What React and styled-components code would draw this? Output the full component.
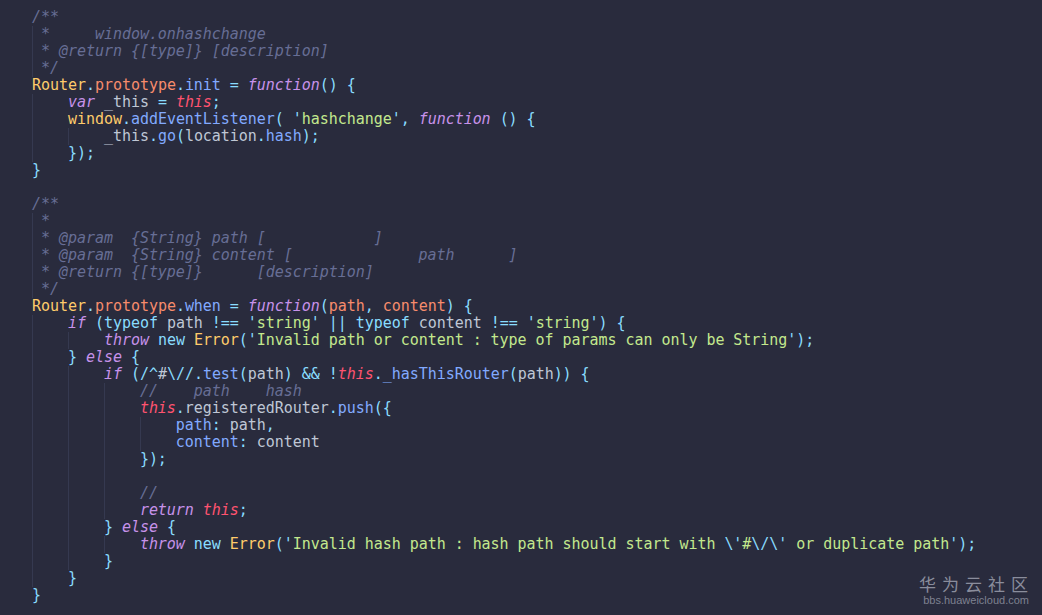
import React from "react";
import styled, { createGlobalStyle } from "styled-components";

const Global = createGlobalStyle`
  html, body { margin: 0; padding: 0; background: #292b3d; }
  #root { min-height: 100vh; }
`;

const COLORS = {
  c: "#676e95",
  cls: "#ffcb6b",
  p: "#89ddff",
  pr: "#f78c6c",
  fn: "#82aaff",
  kw: "#c792ea",
  th: "#ff5370",
  v: "#bfc7d5",
  s: "#c3e88d",
  par: "#f78c6c",
  key: "#82aaff",
};
const ITALIC = { c: true, kw: true, th: true };

const Screen = styled.div`
  position: relative;
  width: 1042px;
  height: 615px;
  overflow: hidden;
  background: #292b3d;
`;

const Code = styled.pre`
  margin: 0;
  padding: 9px 0 0 32px;
  font-family: "DejaVu Sans Mono", "Liberation Mono", monospace;
  font-size: 15px;
  line-height: 17px;
  letter-spacing: -0.04px;
  color: #bfc7d5;
  display: flex;
  flex-direction: column;
`;

const Line = styled.div`
  height: 17px;
  white-space: pre;
  background-image: repeating-linear-gradient(
    to right,
    #353950 0 1px,
    transparent 1px 36px
  );
  background-repeat: no-repeat;
  background-size: ${(p) => p.$guides * 36}px 100%;
`;

const Tok = styled.span`
  color: ${(p) => COLORS[p.$k] || "#bfc7d5"};
  font-style: ${(p) => (ITALIC[p.$k] ? "italic" : "normal")};
`;

const Watermark = styled.div`
  position: absolute;
  right: 13px;
  bottom: 8px;
  display: flex;
  flex-direction: column;
  align-items: flex-end;
  color: #8a8d9c;
`;

const WmTitle = styled.div`
  font-family: "Noto Sans CJK SC", sans-serif;
  font-size: 17px;
  line-height: 20px;
  letter-spacing: 6px;
  margin-right: -5px;
`;

const WmUrl = styled.div`
  font-family: "Liberation Sans", Arial, sans-serif;
  font-size: 11px;
  line-height: 13px;
  color: #7e8190;
`;

const sp = (n) => ["v", " ".repeat(n)];

const LINES = [
  [0, [["c", "/**"]]],
  [1, [["c", " *     window.onhashchange"]]],
  [1, [["c", " * @return {[type]} [description]"]]],
  [1, [["c", " */"]]],
  [0, [["cls", "Router"], ["p", "."], ["pr", "prototype"], ["p", "."], ["fn", "init"], sp(1), ["p", "="], sp(1), ["kw", "function"], ["p", "()"], sp(1), ["p", "{"]]],
  [1, [sp(4), ["kw", "var"], ["v", " _this "], ["p", "="], sp(1), ["th", "this"], ["p", ";"]]],
  [1, [sp(4), ["cls", "window"], ["p", "."], ["fn", "addEventListener"], ["p", "( "], ["p", "'"], ["s", "hashchange"], ["p", "'"], ["p", ","], sp(1), ["kw", "function"], sp(1), ["p", "()"], sp(1), ["p", "{"]]],
  [2, [sp(8), ["v", "_this"], ["p", "."], ["fn", "go"], ["p", "("], ["v", "location"], ["p", "."], ["fn", "hash"], ["p", ");"]]],
  [1, [sp(4), ["p", "});"]]],
  [0, [["p", "}"]]],
  [0, []],
  [0, [["c", "/**"]]],
  [1, [["c", " *"]]],
  [1, [["c", " * @param  {String} path [            ]"]]],
  [1, [["c", " * @param  {String} content [              path      ]"]]],
  [1, [["c", " * @return {[type]}      [description]"]]],
  [1, [["c", " */"]]],
  [0, [["cls", "Router"], ["p", "."], ["pr", "prototype"], ["p", "."], ["fn", "when"], sp(1), ["p", "="], sp(1), ["kw", "function"], ["p", "("], ["par", "path"], ["p", ","], sp(1), ["par", "content"], ["p", ")"], sp(1), ["p", "{"]]],
  [1, [sp(4), ["kw", "if"], sp(1), ["p", "("], ["p", "typeof"], ["v", " path "], ["p", "!=="], sp(1), ["p", "'"], ["s", "string"], ["p", "'"], sp(1), ["p", "||"], sp(1), ["p", "typeof"], ["v", " content "], ["p", "!=="], sp(1), ["p", "'"], ["s", "string"], ["p", "'"], ["p", ")"], sp(1), ["p", "{"]]],
  [2, [sp(8), ["kw", "throw"], sp(1), ["p", "new"], sp(1), ["cls", "Error"], ["p", "("], ["p", "'"], ["s", "Invalid path or content : type of params can only be String"], ["p", "'"], ["p", ");"]]],
  [1, [sp(4), ["p", "}"], sp(1), ["kw", "else"], sp(1), ["p", "{"]]],
  [2, [sp(8), ["kw", "if"], sp(1), ["p", "("], ["p", "/^"], ["v", "#"], ["p", "\\/"], ["p", "/"], ["p", "."], ["fn", "test"], ["p", "("], ["v", "path"], ["p", ")"], sp(1), ["p", "&&"], sp(1), ["p", "!"], ["th", "this"], ["p", "."], ["fn", "_hasThisRouter"], ["p", "("], ["v", "path"], ["p", "))"], sp(1), ["p", "{"]]],
  [3, [sp(12), ["c", "//    path    hash"]]],
  [3, [sp(12), ["th", "this"], ["p", "."], ["v", "registeredRouter"], ["p", "."], ["fn", "push"], ["p", "({"]]],
  [4, [sp(16), ["key", "path"], ["p", ":"], sp(1), ["v", "path"], ["p", ","]]],
  [4, [sp(16), ["key", "content"], ["p", ":"], sp(1), ["v", "content"]]],
  [3, [sp(12), ["p", "});"]]],
  [3, []],
  [3, [sp(12), ["c", "//"]]],
  [3, [sp(12), ["kw", "return"], sp(1), ["th", "this"], ["p", ";"]]],
  [2, [sp(8), ["p", "}"], sp(1), ["kw", "else"], sp(1), ["p", "{"]]],
  [3, [sp(12), ["kw", "throw"], sp(1), ["p", "new"], sp(1), ["cls", "Error"], ["p", "("], ["p", "'"], ["s", "Invalid hash path : hash path should start with "], ["p", "\\'"], ["s", "#"], ["p", "\\/"], ["p", "\\'"], ["s", " or duplicate path"], ["p", "'"], ["p", ");"]]],
  [2, [sp(8), ["p", "}"]]],
  [1, [sp(4), ["p", "}"]]],
  [0, [["p", "}"]]],
];

export default function App() {
  return (
    <Screen>
      <Global />
      <Code>
        {LINES.map(([guides, toks], i) => (
          <Line key={i} $guides={guides}>
            {toks.length === 0
              ? " "
              : toks.map(([k, t], j) => (
                  <Tok key={j} $k={k}>
                    {t}
                  </Tok>
                ))}
          </Line>
        ))}
      </Code>
      <Watermark>
        <WmTitle>华为云社区</WmTitle>
        <WmUrl>bbs.huaweicloud.com</WmUrl>
      </Watermark>
    </Screen>
  );
}
